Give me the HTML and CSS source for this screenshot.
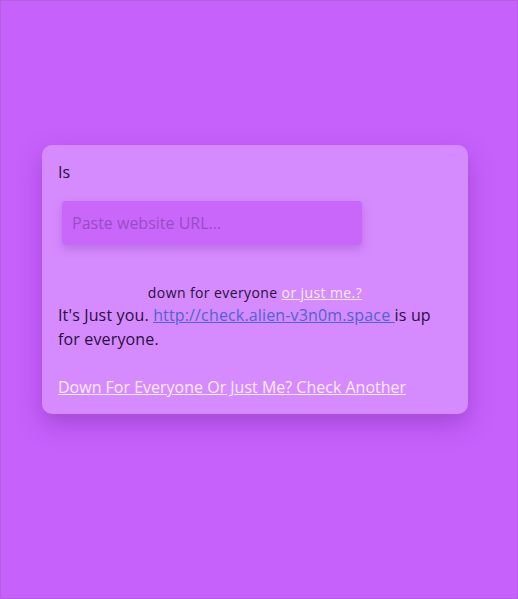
FILE: index.html
```html
<!DOCTYPE html>
<html lang="en">
<head>
<meta charset="utf-8">
<title>Down for everyone or just me?</title>
<link rel="stylesheet" href="styles.css">
</head>
<body>
<main class="page">
  <section class="card">
    <p class="is">Is</p>
    <form class="form">
      <input class="url" type="text" placeholder="Paste website URL...">
    </form>
    <p class="title">down for everyone <a class="light" href="#">or just me.?</a></p>
    <p class="result">It's Just you. <a class="site" href="#">http://check.alien-v3n0m.space </a>is up for everyone.</p>
    <p class="again"><a class="light" href="#">Down For Everyone Or Just Me? Check Another</a></p>
  </section>
</main>
</body>
</html>
```

FILE: styles.css
```css
* { box-sizing: border-box; }
html, body {
  margin: 0;
  height: 100%;
}
body {
  background: #c761fc;
  font-family: "Open Sans", "DejaVu Sans", sans-serif;
  color: #2a0f3f;
  border: 1px solid #b45ee0;
}
.page {
  height: 100%;
  display: flex;
  justify-content: center;
  padding: 144px 8px 0 0;
}
.card {
  width: 426px;
  height: 269px;
  background: #d58bfd;
  border-radius: 10px;
  padding: 14px 16px 0 16px;
  box-shadow: 0 10px 24px rgba(120, 40, 170, 0.45);
}
p { margin: 0; }
.is {
  font-size: 16px;
  line-height: 26px;
}
.form {
  margin: 16px 0 0 4px;
}
.url {
  width: 300px;
  height: 44px;
  border: none;
  border-radius: 4px;
  background: #c967fb;
  padding: 0 10px;
  font-family: inherit;
  font-size: 16px;
  box-shadow: 0 4px 10px rgba(140, 60, 190, 0.35);
  outline: none;
}
.url::placeholder { color: #9a4cc6; }
.title {
  margin-top: 38px;
  text-align: center;
  font-size: 14px;
  letter-spacing: 0.4px;
  line-height: 20px;
}
.result {
  font-size: 16px;
  letter-spacing: 0.15px;
  line-height: 24px;
}
.again {
  margin-top: 24px;
  font-size: 16px;
  line-height: 24px;
}
a.light { color: #f8ecff; }
a.site { color: #5161d6; }
```
